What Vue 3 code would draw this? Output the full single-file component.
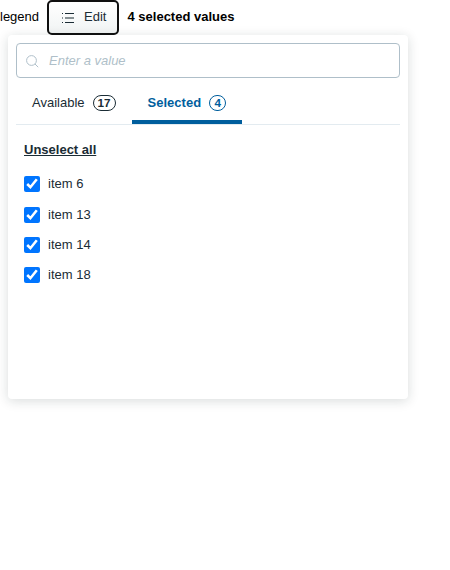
<script setup>
import { ref } from 'vue'

const items = ref([
  { label: 'item 6', checked: true },
  { label: 'item 13', checked: true },
  { label: 'item 14', checked: true },
  { label: 'item 18', checked: true },
])
const query = ref('')
</script>

<template>
  <main class="page">
    <header class="bar">
      <span class="legend">legend</span>
      <button class="edit" type="button">
        <svg width="14" height="12" viewBox="0 0 14 12" shape-rendering="crispEdges">
          <path d="M0 1h1v1h-1zM3 1h9v1h-9zM0 10h1v1h-1zM3 10h9v1h-9z" fill="#1a2c35" />
          <path d="M0 5h1v2h-1zM3 5h9v2h-9z" fill="#879194" />
        </svg>
        <span>Edit</span>
      </button>
      <strong class="count">4 selected values</strong>
    </header>
    <section class="panel">
      <label class="search">
        <svg width="13" height="13" viewBox="0 0 13 13" fill="none" stroke="#afbfc9">
          <circle cx="5.5" cy="5.5" r="4.9" />
          <path d="M9 9l3.2 3.2" />
        </svg>
        <input v-model="query" type="text" placeholder="Enter a value" />
      </label>
      <nav class="tabs">
        <div class="tab">Available<span class="badge">17</span></div>
        <div class="tab active">Selected<span class="badge">4</span></div>
      </nav>
      <div class="content">
        <a class="unselect">Unselect all</a>
        <ul class="list">
          <li v-for="item in items" :key="item.label">
            <label class="item"><input v-model="item.checked" type="checkbox" />{{ item.label }}</label>
          </li>
        </ul>
      </div>
    </section>
  </main>
</template>

<style>
body {
  background: #fff;
}
</style>

<style scoped>
.page {
  min-height: 570px;
  font: 13px/18px "Liberation Sans", Arial, sans-serif;
  color: #000;
}
.bar {
  display: flex;
  height: 35px;
  align-items: flex-start;
}
.legend {
  width: 47px;
  padding-top: 8px;
  box-sizing: border-box;
}
.edit {
  width: 72px;
  height: 35px;
  box-sizing: border-box;
  display: flex;
  align-items: center;
  gap: 8px;
  padding: 0 0 1px 13px;
  border: 2px solid #101010;
  border-radius: 5px;
  background: linear-gradient(#fff, #f1f4f4);
  color: #1a2c35;
  font: inherit;
}
.edit svg {
  margin-top: 2px;
}
.count {
  margin-left: 8.5px;
  padding-top: 8px;
}
.panel {
  width: 400px;
  height: 364px;
  margin-left: 8px;
  padding: 8px;
  box-sizing: border-box;
  background: #fff;
  border-radius: 4px;
  box-shadow: 0 2px 12px rgba(16, 36, 40, 0.16);
  position: relative;
  color: #1a2c35;
}
.search {
  display: flex;
  align-items: center;
  gap: 10px;
  height: 35px;
  box-sizing: border-box;
  padding: 1px 9px 0;
  border: 1px solid #afbfc9;
  border-radius: 4px;
}
.search input {
  flex: 1;
  padding: 0;
  border: 0;
  outline: 0;
  background: none;
  font: inherit;
}
.search input::placeholder {
  color: #afbfc9;
  font-style: italic;
}
.tabs {
  display: flex;
  height: 47px;
  box-sizing: border-box;
  border-bottom: 1px solid #e3ebf0;
}
.tab {
  display: flex;
  align-items: center;
  justify-content: space-between;
  width: 115.6px;
  box-sizing: border-box;
  padding: 8px 16px 0;
  border-bottom: 4px solid transparent;
}
.active {
  width: 110.4px;
  color: #005e9d;
  border-bottom-color: #005e9d;
  font-weight: bold;
}
.badge {
  height: 16px;
  box-sizing: border-box;
  padding: 0 4px;
  border: 1px solid currentColor;
  border-radius: 8px;
  font-size: 11.7px;
  line-height: 14px;
  font-weight: bold;
}
.content {
  padding: 16px 8px;
}
.unselect {
  display: block;
  font-weight: bold;
  text-decoration: underline;
}
.list {
  list-style: none;
  margin: 16.33px 0 0;
  padding: 0;
  display: grid;
  gap: 12.33px;
}
.item {
  display: flex;
  align-items: center;
  gap: 8px;
  height: 18px;
}
.item input {
  width: 16px;
  height: 16px;
  margin: 0;
}
</style>
